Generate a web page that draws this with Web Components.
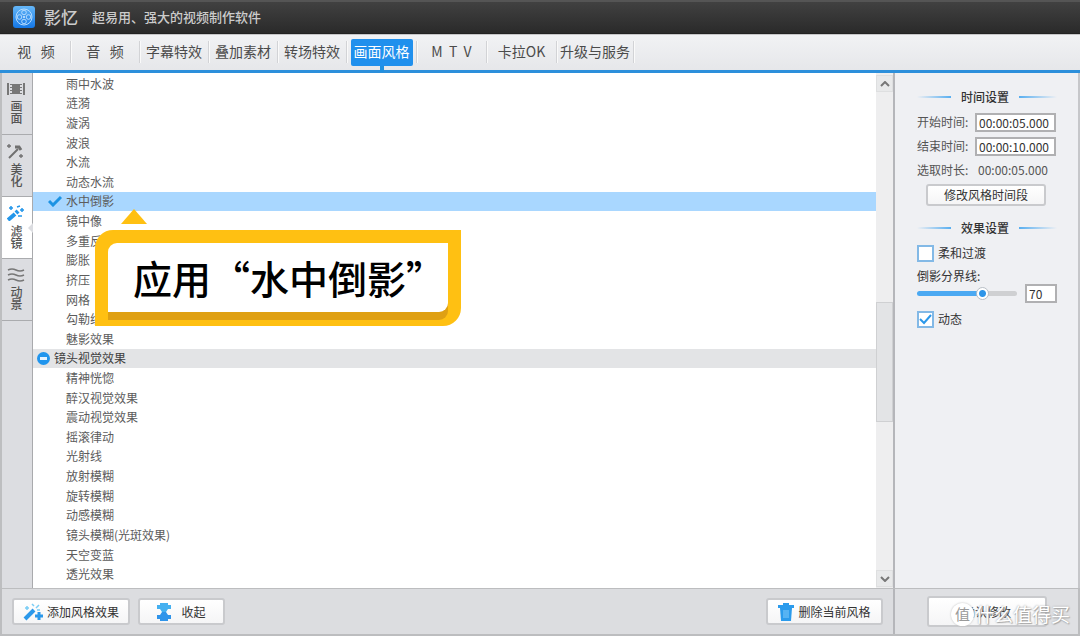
<!DOCTYPE html>
<html lang="zh-CN">
<head>
<meta charset="utf-8">
<title>影忆</title>
<style>
  html, body { margin: 0; min-height: 100%; }
  body { font: 12px/18px "Noto Sans CJK SC", "Liberation Sans", sans-serif; color: #555; background: #eff0f3; }
</style>
</head>
<body>
<yy-app></yy-app>
<script>
const define = (name, html, init) => customElements.define(name, class extends HTMLElement {
  constructor() {
    super();
    this.attachShadow({ mode: "open" }).innerHTML =
      "<style>*{box-sizing:border-box}button,input{font:inherit;color:inherit;margin:0}</style>" + html;
  }
  connectedCallback() { if (init) init.call(this, this.shadowRoot); }
});

const ICONS = {
  film: '<svg width="18" height="14" viewBox="0 0 18 14" fill="#777"><path d="M0 1h2v12H0zM16 1h2v12h-2zM3 2h2v1H3zM3 5h2v1H3zM3 8h2v1H3zM3 11h2v1H3zM13 2h2v1h-2zM13 5h2v1h-2zM13 8h2v1h-2zM13 11h2v1h-2zM5 2h8v10H5z"/></svg>',
  beauty: '<svg width="18" height="16" viewBox="0 0 18 16" fill="none" stroke="#707070" stroke-width="2"><path d="m2 15 9-9"/><path stroke-width="3" d="m8 4 4 0 2 3"/><path stroke-width="1.3" d="M0 3h4M2 1v4M12 13h4M14 11v4"/></svg>',
  wand: '<svg width="18" height="16" viewBox="0 0 18 16" fill="none" stroke="#2396ea"><path stroke-width="4" d="m1 15 7-6"/><path stroke-width="4" d="m9 8 2-2"/><path stroke-width="1.5" d="M2 3h4M4 1v4M10 2l3-1M13 5h4M15 3v4M11 11h4"/></svg>',
  wave: '<svg width="18" height="14" viewBox="0 0 18 14" fill="none" stroke="#777" stroke-width="1.6"><path d="M1 2q4-2 8 0t8 0M1 7q4-2 8 0t8 0M1 12q4-2 8 0t8 0"/></svg>',
  magic: '<svg width="20" height="18" viewBox="0 0 20 18" fill="none" stroke="#2b98ea"><path stroke-width="4" d="m2 16 9-9"/><path stroke-width="3" d="M12 13h8M16 9v8"/><path stroke="#79cdf5" stroke-width="1.5" d="M2 5h4M4 3v4M9 1l2 2M16 2l-3 3M14 7h3"/></svg>',
  collapse: '<svg width="14" height="18" viewBox="0 0 14 18"><path fill="#45b0f0" d="M3 0h8v2h3v4h-3L9 9H5L3 6H0V2h3z"/><path fill="#2f94ea" d="M5 9h4l2 3h3v4h-3v2H3v-2H0v-4h3z"/></svg>',
  trash: '<svg width="16" height="18" viewBox="0 0 16 18" fill="#2b9bec"><path d="M5 0h6v2h5v3H0V2h5z"/><path d="M2 5h12l-1 13H3z"/><path stroke="#82cbfa" stroke-width="1" d="M6 7v8M8 7v8M10 7v8"/></svg>',
  up: '<svg width="10" height="6" viewBox="0 0 10 6" fill="none" stroke="#777" stroke-width="2"><path d="m1 5 4-4 4 4"/></svg>',
  down: '<svg width="10" height="6" viewBox="0 0 10 6" fill="none" stroke="#777" stroke-width="2"><path d="m1 1 4 4 4-4"/></svg>'
};

define("yy-icon", `<style>:host{display:inline-flex;flex:none}svg{display:block}</style><span></span>`, function (r) {
  r.querySelector("span").innerHTML = ICONS[this.getAttribute("name")];
});

define("yy-titlebar", `<style>
  :host{display:block}
  header{display:flex;align-items:center;height:34px;padding:0 13px 2px;border-top:2px solid #555;border-bottom:1px solid #222;background:linear-gradient(#414141,#2a2a2a);color:#ccc;font-weight:500}
  svg{flex:none;width:22px;height:22px}
  h1{margin:0 0 0 9px;font-size:17px;line-height:24px;font-weight:500}
  p{margin:0 0 0 14px;font-size:13px;line-height:20px}
  </style>
  <header>
    <svg viewBox="0 0 22 22"><defs><linearGradient id="g" x2="0" y2="1"><stop stop-color="#65b7f8"/><stop offset="1" stop-color="#1477e6"/></linearGradient></defs><rect width="22" height="22" rx="3" fill="url(#g)"/><g fill="none" stroke="#b5dcff"><circle cx="11" cy="11" r="8"/><circle cx="11" cy="6.5" r="2.3"/><circle cx="11" cy="15.5" r="2.3"/><circle cx="6.5" cy="11" r="2.3"/><circle cx="15.5" cy="11" r="2.3"/></g><circle cx="11" cy="11" r="1" fill="#d5ecff"/></svg>
    <h1>影忆</h1><p>超易用、强大的视频制作软件</p>
  </header>`);

define("yy-tab", `<style>
  :host{display:flex;align-items:center;justify-content:center;border-right:1px solid #d2d3d6;height:22px;box-shadow:1px 0 #fafafa}
  button{position:relative;border:0;padding:0 3px 3px;height:27px;background:none;font-size:14px;line-height:20px;white-space:pre;flex:none;color:#4b4b4b}
  :host([active]) button{background:#2090ed;color:#fff;border-radius:2px}
  :host([active]) button::after{content:"";position:absolute;left:50%;top:100%;width:4px;height:6px;margin-left:-2px;background:#2090e0}
  </style><button type="button"><slot></slot></button>`);

define("yy-nav", `<style>
  :host{display:block}
  nav{display:grid;grid-template-columns:repeat(5,69px) repeat(3,70px) 77px;align-items:center;height:39px;padding:0 2px 1px;background:linear-gradient(#f1f2f4,#e6e7ea);border-top:1px solid #c6c6c8;border-bottom:3px solid #2c8fdb}
  </style>
  <nav><yy-tab>视   频</yy-tab><yy-tab>音   频</yy-tab><yy-tab>字幕特效</yy-tab><yy-tab>叠加素材</yy-tab><yy-tab>转场特效</yy-tab><yy-tab active>画面风格</yy-tab><yy-tab>M  T  V</yy-tab><yy-tab>卡拉OK</yy-tab><yy-tab>升级与服务</yy-tab></nav>`);

define("yy-side-tab", `<style>
  :host{display:block;position:relative}
  button{display:flex;flex-direction:column;align-items:center;justify-content:center;gap:4px;width:100%;height:62px;padding:0 2px 2px 0;border:0;border-bottom:1px solid #aaabae;background:none;color:#555;font-weight:500}
  :host([active]) button{background:#fff}
  :host([active])::after{content:"";position:absolute;right:-1px;top:26px;border:5px solid transparent;border-right-color:#dcdde1;border-left:0}
  span{writing-mode:vertical-rl;line-height:14px}
  </style><button type="button"><slot name="icon"></slot><span><slot></slot></span></button>`);

define("yy-sidebar", `<style>
  :host{display:block;background:#dcdde1;border-left:2px solid #bdbec0;border-right:1px solid #a9aaad}
  </style>
  <yy-side-tab><yy-icon slot="icon" name="film"></yy-icon>画面</yy-side-tab>
  <yy-side-tab><yy-icon slot="icon" name="beauty"></yy-icon>美化</yy-side-tab>
  <yy-side-tab active><yy-icon slot="icon" name="wand"></yy-icon>滤镜</yy-side-tab>
  <yy-side-tab><yy-icon slot="icon" name="wave"></yy-icon>动景</yy-side-tab>`);

define("yy-row", `<style>
  :host{display:flex;align-items:center;padding-left:15px;color:#5c5c5c;line-height:18px;white-space:nowrap}
  svg{display:none;width:14px;height:12px;flex:none}
  span{margin-left:18px}
  :host([selected]){background:#a9d7ff}
  :host([selected]) .tick{display:block}
  :host([selected]) span{margin-left:4px}
  :host([group]){background:#e3e4e6;padding-left:4px;color:#404040}
  :host([group]) .fold{display:block;width:13px;height:13px}
  :host([group]) span{margin-left:4px}
  </style>
  <svg class="tick" viewBox="0 0 14 12"><path d="m1 6 4 4 8-8" fill="none" stroke="#1c93e3" stroke-width="3"/></svg>
  <svg class="fold" viewBox="0 0 13 13"><circle cx="6.5" cy="6.5" r="6.5" fill="#2095ed"/><path d="M3 5h7v3H3z" fill="#e4f3ff"/></svg>
  <span><slot></slot></span>`);

define("yy-callout", `<style>
  :host{display:block;background:#ffc012;border-radius:18px 0;padding:13px 13px 6px}
  :host::before{content:"";position:absolute;left:26px;bottom:100%;margin-bottom:6px;border:13px solid transparent;border-top:0;border-bottom:15px solid #ffc012}
  div{background:#fff;border-radius:9px 0;box-shadow:0 8px #dfa013;height:69px;margin-bottom:8px;padding:0 0 0 25px;width:340px;font-size:39px;line-height:68px;font-weight:500;color:#000;white-space:nowrap}
  </style><div><slot></slot></div>`);

define("yy-list", `<style>
  :host{display:block;position:relative;background:#fff;min-width:0}
  div{display:grid;grid-auto-rows:minmax(19px,1fr);height:100%;padding:1px 0 4px}
  yy-callout{position:absolute;left:62px;top:157px}
  </style><div role="listbox" aria-label="滤镜"></div><yy-callout>应用“水中倒影”</yy-callout>`, function (r) {
  const box = r.querySelector("div");
  for (const name of ["雨中水波","涟漪","漩涡","波浪","水流","动态水流","水中倒影","镜中像","多重反射","膨胀","挤压","网格","勾勒线条","魅影效果","镜头视觉效果","精神恍惚","醉汉视觉效果","震动视觉效果","摇滚律动","光射线","放射模糊","旋转模糊","动感模糊","镜头模糊(光斑效果)","天空变蓝","透光效果"]) {
    const row = document.createElement("yy-row");
    row.textContent = name;
    row.setAttribute("role", "option");
    if (name === "水中倒影") row.setAttribute("selected", "");
    if (name === "镜头视觉效果") row.setAttribute("group", "");
    box.append(row);
  }
});

define("yy-scrollbar", `<style>
  :host{display:flex;flex-direction:column;background:#eeeeef;padding:2px 0 1px}
  button{flex:none;display:flex;align-items:center;justify-content:center;height:17px;padding:0;border:1px solid #dedfe0;background:#e8e9ea}
  .track{flex:1;display:grid;grid-template-rows:44fr 25fr 31fr}
  .thumb{grid-row:2;background:#e3e4e6;border:1px solid #cfd0d2}
  </style><button type="button" aria-label="向上"><yy-icon name="up"></yy-icon></button><div class="track"><div class="thumb"></div></div><button type="button" aria-label="向下"><yy-icon name="down"></yy-icon></button>`);

define("yy-button", `<style>
  :host{display:block}
  button{display:flex;align-items:center;justify-content:center;gap:4px;width:100%;height:100%;padding:0;border:2px solid #c9cacd;border-radius:3px;background:linear-gradient(#fff,#f5f5f6);color:#333;line-height:16px;white-space:nowrap}
  :host([roomy]) button{gap:10px}
  </style><button type="button"><slot></slot></button>`);

define("yy-heading", `<style>
  :host{display:grid;grid-template-columns:34px auto 38px;justify-content:space-between;align-items:center}
  i{height:2px;background:linear-gradient(90deg,transparent,#58aef0)}
  i:last-child{background:linear-gradient(90deg,#58aef0,transparent)}
  h2{margin:0;font-size:12px;line-height:18px;font-weight:500;color:#333}
  </style><i></i><h2><slot></slot></h2><i></i>`);

define("yy-panel", `<style>
  :host{display:block;padding:15px 21px 0 22px;background:#eff0f3;border-left:2px solid #b5b6ba;border-right:2px solid #c6c7ca}
  .time{display:grid;grid-template-columns:58px 80px;grid-auto-rows:24px;align-items:center;margin-top:4px}
  input[type=text]{display:block;width:81px;height:19px;padding:0 2px;border:2px solid #b0b0b2;background:#fff;color:#333;line-height:15px;outline:0}
  output{padding-left:3px}
  .edit{width:120px;height:22px;margin:2px 0 0 9px}
  .effect{margin-top:13px}
  .check{display:flex;align-items:center;gap:4px;height:18px;color:#333}
  .soft{margin-top:7px}
  input[type=checkbox]{appearance:none;width:17px;height:17px;border:2px solid #83b9e6;background:#fff}
  .tick{position:relative;display:flex}
  .tick svg{position:absolute;left:2px;top:3px;pointer-events:none}
  .range-label{display:block;margin-top:5px;color:#333}
  .range{display:grid;grid-template-columns:100px 32px;gap:8px;align-items:center;height:18px;margin:-1px 0 8px}
  input[type=range]{appearance:none;width:100px;height:14px;background:none}
  input[type=range]::-webkit-slider-runnable-track{height:5px;border-radius:3px;background:linear-gradient(90deg,#4ba9f2 66%,#cfd0d2 66%)}
  input[type=range]::-webkit-slider-thumb{appearance:none;width:13px;height:13px;margin-top:-4px;border-radius:50%;border:1px solid #b9bfc6;background:radial-gradient(circle,#2f95e8 0 3px,#fff 4px)}
  .range input[type=text]{width:32px}
  </style>
  <yy-heading>时间设置</yy-heading>
  <div class="time">
    <label for="a">开始时间:</label><input type="text" id="a" value="00:00:05.000">
    <label for="b">结束时间:</label><input type="text" id="b" value="00:00:10.000">
    <span>选取时长:</span><output>00:00:05.000</output>
  </div>
  <yy-button class="edit">修改风格时间段</yy-button>
  <yy-heading class="effect">效果设置</yy-heading>
  <label class="check soft"><input type="checkbox">柔和过渡</label>
  <label class="range-label" for="r">倒影分界线:</label>
  <div class="range"><input type="range" id="r" value="68"><input type="text" value="70" aria-label="倒影分界线"></div>
  <label class="check"><span class="tick"><input type="checkbox" checked><svg width="13" height="11" viewBox="0 0 13 11"><path d="m1 5 4 4 7-8" fill="none" stroke="#2b98ea" stroke-width="2"/></svg></span>动态</label>`);

define("yy-watermark", `<style>
  :host{display:flex;align-items:center;gap:1px;color:#fff;font-size:19px;line-height:26px;white-space:nowrap;text-shadow:0 0 2px #999,1px 1px 1px #aaa;pointer-events:none}
  b{display:block;width:23px;height:23px;border-radius:50%;background:#fff;color:#999;font-size:15px;line-height:22px;font-weight:400;text-align:center;text-shadow:none;box-shadow:0 0 2px #bbb}
  </style><b>值</b><slot></slot>`);

define("yy-footer", `<style>
  :host{display:grid;grid-template-columns:1fr 185px;min-height:48px;background:#dcdde0;border:2px solid #bcbdbf;border-width:1px 2px 2px}
  .left{display:flex;align-items:center;gap:8px;padding:0 10px}
  .left yy-button{width:118px;height:27px}
  .left .fold{width:87px}
  .left .del{margin-left:auto;width:117px}
  .right{position:relative;display:flex;align-items:center;padding-left:32px;background:#dfe0e3;border-left:2px solid #b5b6ba}
  .right yy-button{width:120px;height:31px}
  yy-watermark{position:absolute;right:8px;top:12px}
  </style>
  <div class="left">
    <yy-button><yy-icon name="magic"></yy-icon>添加风格效果</yy-button>
    <yy-button class="fold" roomy><yy-icon name="collapse"></yy-icon>收起</yy-button>
    <yy-button class="del"><yy-icon name="trash"></yy-icon>删除当前风格</yy-button>
  </div>
  <div class="right"><yy-button>确认修改</yy-button><yy-watermark>什么值得买</yy-watermark></div>`);

define("yy-app", `<style>
  :host{display:flex;flex-direction:column;min-height:100vh}
  main{flex:1;display:grid;grid-template-columns:33px 1fr 17px 187px}
  </style>
  <yy-titlebar></yy-titlebar><yy-nav></yy-nav>
  <main><yy-sidebar></yy-sidebar><yy-list></yy-list><yy-scrollbar></yy-scrollbar><yy-panel></yy-panel></main>
  <yy-footer></yy-footer>`);
</script>
</body>
</html>
